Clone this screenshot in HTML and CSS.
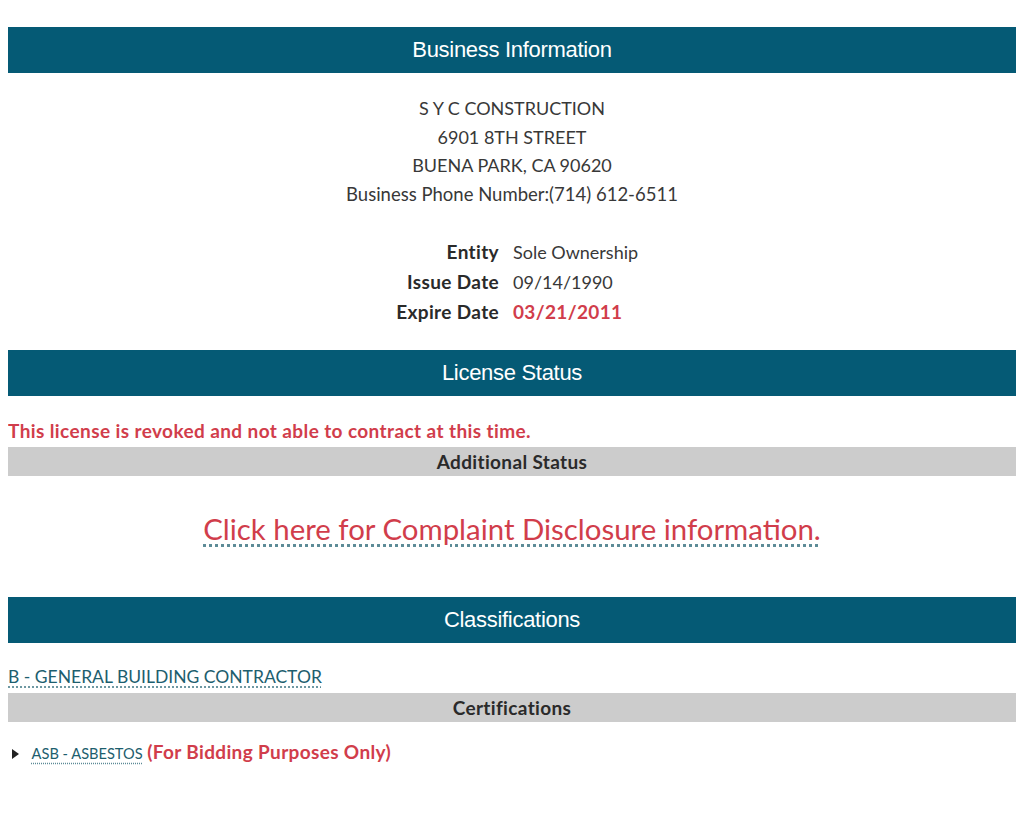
FILE: index.html
```html
<!DOCTYPE html>
<html lang="en">
<head>
  <meta charset="UTF-8" />
  <title>License Detail</title>
  <meta name="viewport" content="width=device-width, initial-scale=1.0" />
  <link rel="stylesheet" href="styles.css">
</head>
<body>
  <div class="section-head first">Business Information</div>

  <div class="address">
    <div>S Y C CONSTRUCTION</div>
    <div>6901 8TH STREET</div>
    <div>BUENA PARK, CA 90620</div>
    <div class="phone">Business Phone Number:(714) 612-6511</div>
  </div>

  <div class="details">
    <div class="label">Entity</div>
    <div class="value">Sole Ownership</div>
    <div class="label">Issue Date</div>
    <div class="value">09/14/1990</div>
    <div class="label">Expire Date</div>
    <div class="value expired">03/21/2011</div>
  </div>

  <div class="section-head">License Status</div>
  <p class="status-alert">This license is revoked and not able to contract at this time.</p>
  <div class="sub-head">Additional Status</div>

  <p class="complaint"><a href="#">Click here for Complaint Disclosure information.</a></p>

  <div class="section-head">Classifications</div>
  <p class="class-line"><a href="#">B - GENERAL BUILDING CONTRACTOR</a></p>
  <div class="sub-head">Certifications</div>

  <div class="cert">
    <span class="toggle"></span>
    <a href="#" class="cert-link">ASB - ASBESTOS</a>
    <span class="bidding">(For Bidding Purposes Only)</span>
  </div>
</body>
</html>
```

FILE: styles.css
```css
body {
  margin: 8px;
  font-family: 'Lato', 'Open Sans', sans-serif;
  font-size: 18px;
  color: #383838;
  background: #fff;
}
a {
  text-decoration: underline dotted;
  text-decoration-color: #5b8a96;
  text-underline-offset: 4px;
}
.section-head {
  background-color: #055a75;
  color: #fff;
  font-family: 'Liberation Sans', Arial, sans-serif;
  font-size: 22px;
  text-align: center;
  height: 46px;
  line-height: 46px;
  letter-spacing: -0.3px;
}
.section-head.first {
  margin-top: 19px;
}
.address {
  text-align: center;
  line-height: 28.5px;
  margin-top: 21px;
}
.address .phone {
  font-size: 18.5px;
}
.details {
  display: grid;
  grid-template-columns: 1fr 1fr;
  column-gap: 14px;
  padding-right: 12px;
  margin-top: 29px;
  margin-bottom: 23px;
  line-height: 30px;
}
.details .label {
  text-align: right;
  font-weight: bold;
  font-size: 19px;
  letter-spacing: 0.35px;
  color: #2a2a2a;
}
.details .expired {
  color: #d13d4b;
  font-weight: bold;
  font-size: 19px;
  letter-spacing: 0.35px;
}
.status-alert {
  color: #d13d4b;
  font-weight: bold;
  font-size: 19px;
  letter-spacing: 0.4px;
  margin: 23px 0 4px;
  line-height: 24px;
}
.sub-head {
  background-color: #cccccc;
  color: #2a2a2a;
  text-align: center;
  font-weight: bold;
  font-size: 19px;
  letter-spacing: 0.35px;
  height: 29px;
  line-height: 29px;
}
.complaint {
  text-align: center;
  font-size: 29.4px;
  margin: 35px 0 50px;
  line-height: 36px;
}
.complaint a {
  color: #d13d4b;
}
.class-line {
  margin: 22px 0 4px;
  line-height: 24px;
  font-size: 17.5px;
}
.class-line a {
  color: #1d5e6e;
}
.cert {
  margin-top: 18px;
  padding-left: 4px;
  line-height: 24px;
}
.toggle {
  display: inline-block;
  width: 0;
  height: 0;
  border-top: 5px solid transparent;
  border-bottom: 5px solid transparent;
  border-left: 7px solid #222;
  margin-right: 8px;
  vertical-align: 0;
}
.cert-link {
  color: #1d5e6e;
  font-size: 14.6px;
}
.bidding {
  color: #d13d4b;
  font-weight: bold;
  font-size: 19px;
  letter-spacing: 0.35px;
}
```
